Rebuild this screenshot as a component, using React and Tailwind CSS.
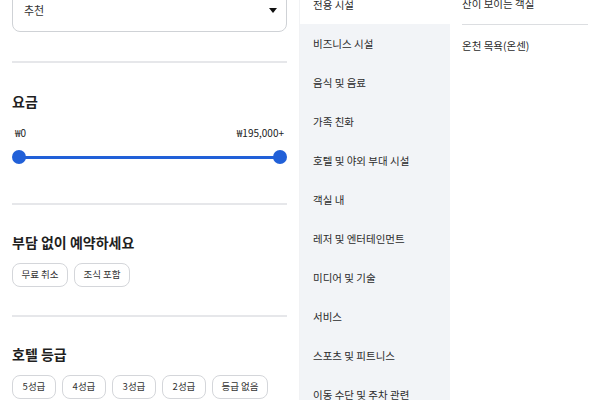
import React from 'react';

const categories = [
  '전용 시설',
  '비즈니스 시설',
  '음식 및 음료',
  '가족 친화',
  '호텔 및 야외 부대 시설',
  '객실 내',
  '레저 및 엔터테인먼트',
  '미디어 및 기술',
  '서비스',
  '스포츠 및 피트니스',
  '이동 수단 및 주차 관련',
];

const Chip = ({ label, w }) => (
  <button className={`h-[24px] ${w} shrink-0 whitespace-nowrap rounded-lg border border-[#d4d6da] bg-white text-[9.5px] text-[#333] leading-none flex items-center justify-center`}>
    {label}
  </button>
);

const App = () => {
  return (
    <div
      className="w-[600px] h-[400px] overflow-hidden bg-white flex text-[#1f1f1f]"
      style={{ fontFamily: '"Noto Sans CJK KR", "Noto Sans", sans-serif' }}
    >
      {/* filter column */}
      <div className="w-[300px] shrink-0 border-r border-[#f1f2f4] px-3 -mt-[12px]">
        <div className="h-[44px] rounded-lg border border-[#cfd2d6] flex items-center justify-between pl-[11px] pr-[9px]">
          <span className="text-[11px] text-[#333]">추천</span>
          <svg width="8" height="5" viewBox="0 0 8 5">
            <path d="M0 0h8L4 5z" fill="#111" />
          </svg>
        </div>
        <div className="mt-[29px] border-t-2 border-[#e6e7ea]" />

        <h2 className="mt-[28px] text-[14px] font-bold leading-[20px]">요금</h2>
        <div className="mt-[14px] flex justify-between px-[3px] text-[10px] leading-[16px] text-[#222]">
          <span>₩0</span>
          <span>₩195,000+</span>
        </div>
        <div className="mt-[9px] relative h-[14px] flex items-center">
          <div className="h-[3px] w-full mx-[7px] bg-[#2160d8]" />
          <div className="absolute left-0 w-[14px] h-[14px] rounded-full bg-[#2160d8]" />
          <div className="absolute right-0 w-[14px] h-[14px] rounded-full bg-[#2160d8]" />
        </div>
        <div className="mt-[39px] border-t-2 border-[#e6e7ea]" />

        <h2 className="mt-[27px] text-[14px] font-bold leading-[20px]">부담 없이 예약하세요</h2>
        <div className="mt-[11px] flex gap-[6px]">
          <Chip label="무료 취소" w="w-[56px]" />
          <Chip label="조식 포함" w="w-[56px]" />
        </div>
        <div className="mt-[28px] border-t-2 border-[#e6e7ea]" />

        <h2 className="mt-[27px] text-[14px] font-bold leading-[20px]">호텔 등급</h2>
        <div className="mt-[11px] flex gap-[6px]">
          <Chip label="5성급" w="w-[44px]" />
          <Chip label="4성급" w="w-[44px]" />
          <Chip label="3성급" w="w-[44px]" />
          <Chip label="2성급" w="w-[44px]" />
          <Chip label="등급 없음" w="w-[56px]" />
        </div>
      </div>

      {/* category list */}
      <div className="w-[150px] shrink-0 -mt-[15px]">
        {categories.map((c, i) => (
          <div
            key={c}
            className={`h-[39px] flex items-center pl-[13px] text-[10.5px] text-[#2b2b2b] whitespace-nowrap ${i === 0 ? 'bg-white' : 'bg-[#f2f4f7]'}`}
          >
            {c}
          </div>
        ))}
      </div>

      {/* options */}
      <div className="flex-1 pl-[12px] pr-[12px] -mt-[16px]">
        <div className="h-[41px] flex items-center border-b border-[#dcdee1] text-[10.5px] text-[#2b2b2b]">
          산이 보이는 객실
        </div>
        <div className="h-[41px] flex items-center text-[10.5px] text-[#2b2b2b]">
          온천 목욕(온센)
        </div>
      </div>
    </div>
  );
};

export default App;
